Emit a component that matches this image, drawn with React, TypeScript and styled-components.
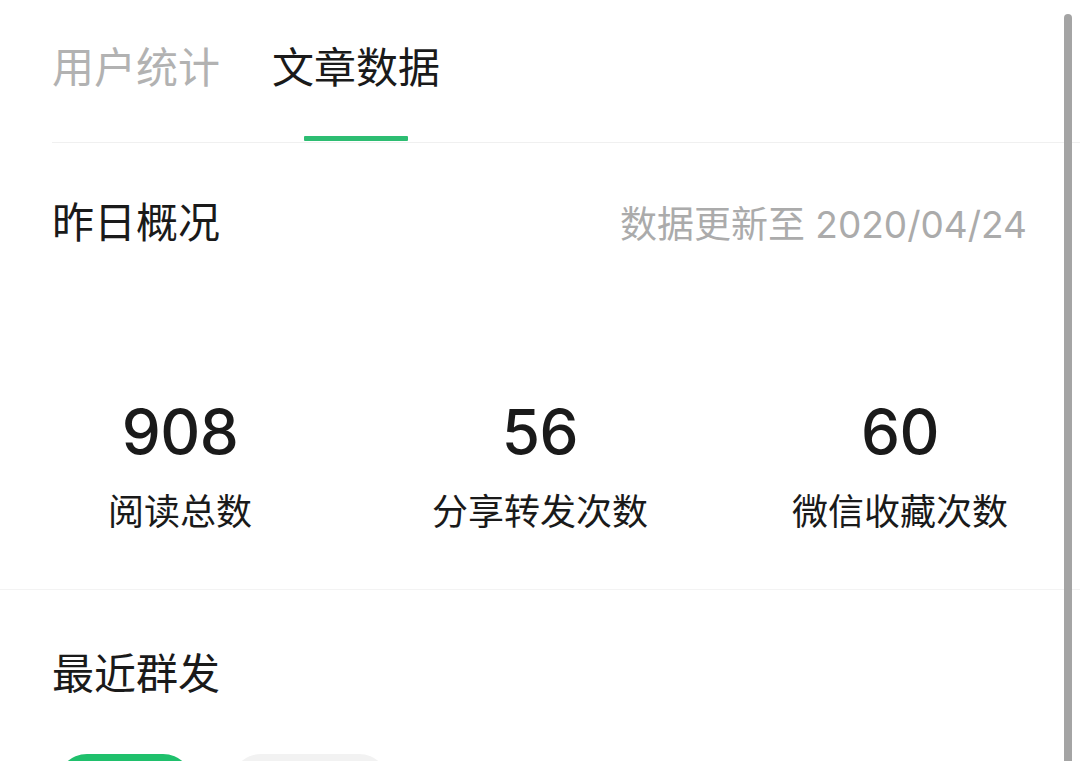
import React from "react";
import styled, { createGlobalStyle } from "styled-components";

const GlobalStyle = createGlobalStyle`
  html, body {
    margin: 0;
    padding: 0;
    background: #ffffff;
  }
  body {
    font-family: Inter, "Noto Sans CJK SC", sans-serif;
    color: #1a1a1a;
  }
  * { box-sizing: border-box; }
`;

const Page = styled.div`
  position: relative;
  width: 1080px;
  height: 761px;
  overflow: hidden;
  background: #ffffff;
`;

const TabBar = styled.nav`
  display: flex;
  gap: 52px;
  height: 143px;
  margin-left: 52px;
  border-bottom: 1px solid #f0f0f0;
`;

const Tab = styled.div`
  display: flex;
  flex-direction: column;
  align-items: center;
  padding-top: 47px;
  height: 100%;
`;

const TabLabel = styled.span<{ $active?: boolean }>`
  font-size: 42px;
  line-height: 42px;
  color: ${(p) => (p.$active ? "#1a1a1a" : "#b2b2b2")};
  white-space: nowrap;
`;

const TabSpacer = styled.div`
  flex: 1;
`;

const Indicator = styled.div<{ $active?: boolean }>`
  width: 104px;
  height: 5px;
  margin-bottom: 1px;
  border-radius: 1px;
  background: ${(p) => (p.$active ? "#2dbd72" : "transparent")};
`;

const Section = styled.section<{ $divider?: boolean }>`
  display: flex;
  flex-direction: column;
  border-top: ${(p) => (p.$divider ? "1px solid #f3f3f3" : "none")};
`;

const SectionHeader = styled.div<{ $top: number }>`
  display: flex;
  align-items: center;
  justify-content: space-between;
  height: 42px;
  margin: ${(p) => p.$top}px 52px 0 52px;
`;

const SectionTitle = styled.h2`
  margin: 0;
  font-size: 42px;
  line-height: 42px;
  font-weight: 400;
  color: #1a1a1a;
`;

const Meta = styled.span`
  font-size: 37px;
  line-height: 37px;
  color: #ababab;
  margin-right: 1px;
  margin-top: 3px;
`;

const StatsGrid = styled.div`
  display: grid;
  grid-template-columns: repeat(3, 1fr);
  margin-top: 157px;
  padding-bottom: 59px;
`;

const Stat = styled.div`
  display: flex;
  flex-direction: column;
  align-items: center;
  gap: 31px;
`;

const StatValue = styled.div`
  font-size: 62px;
  line-height: 62px;
  font-weight: 500;
  color: #1a1a1a;
  letter-spacing: -0.5px;
`;

const StatLabel = styled.div`
  font-size: 36px;
  line-height: 36px;
  color: #1a1a1a;
`;

const PillRow = styled.div`
  display: flex;
  gap: 38px;
  margin: 59px 52px 0 57px;
`;

const Pill = styled.button<{ $active?: boolean; $width: number }>`
  width: ${(p) => p.$width}px;
  height: 60px;
  padding: 0;
  border: none;
  border-radius: 30px;
  background: ${(p) => (p.$active ? "#1fc06c" : "#f2f2f2")};
`;

const Scrollbar = styled.div`
  position: absolute;
  top: 14px;
  right: 8px;
  bottom: -10px;
  width: 8px;
  border-radius: 4px;
  background: #a4a4a4;
`;

const stats = [
  { value: "908", label: "阅读总数" },
  { value: "56", label: "分享转发次数" },
  { value: "60", label: "微信收藏次数" },
];

export default function App() {
  return (
    <Page>
      <GlobalStyle />
      <TabBar>
        <Tab>
          <TabLabel>用户统计</TabLabel>
          <TabSpacer />
          <Indicator />
        </Tab>
        <Tab>
          <TabLabel $active>文章数据</TabLabel>
          <TabSpacer />
          <Indicator $active />
        </Tab>
      </TabBar>

      <Section>
        <SectionHeader $top={59}>
          <SectionTitle>昨日概况</SectionTitle>
          <Meta>数据更新至 2020/04/24</Meta>
        </SectionHeader>
        <StatsGrid>
          {stats.map((s) => (
            <Stat key={s.label}>
              <StatValue>{s.value}</StatValue>
              <StatLabel>{s.label}</StatLabel>
            </Stat>
          ))}
        </StatsGrid>
      </Section>

      <Section $divider>
        <SectionHeader $top={63}>
          <SectionTitle>最近群发</SectionTitle>
        </SectionHeader>
        <PillRow>
          <Pill $active $width={136} aria-label="全部" />
          <Pill $width={158} aria-label="图文消息" />
        </PillRow>
      </Section>

      <Scrollbar />
    </Page>
  );
}
